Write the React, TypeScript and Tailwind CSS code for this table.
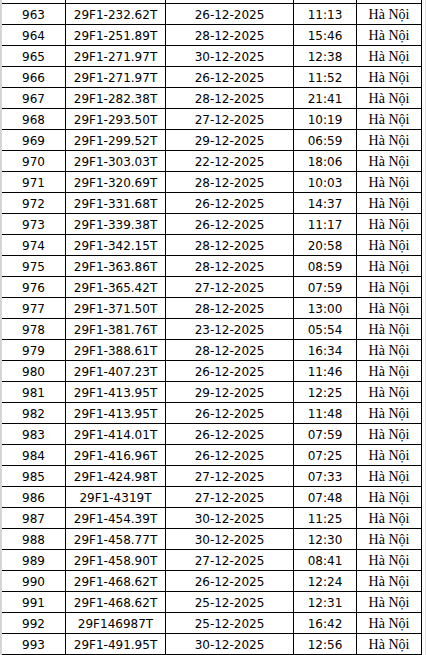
const rows: [string, string, string, string][] = [
  ["963", "29F1-232.62T", "26-12-2025", "11:13"],
  ["964", "29F1-251.89T", "28-12-2025", "15:46"],
  ["965", "29F1-271.97T", "30-12-2025", "12:38"],
  ["966", "29F1-271.97T", "26-12-2025", "11:52"],
  ["967", "29F1-282.38T", "28-12-2025", "21:41"],
  ["968", "29F1-293.50T", "27-12-2025", "10:19"],
  ["969", "29F1-299.52T", "29-12-2025", "06:59"],
  ["970", "29F1-303.03T", "22-12-2025", "18:06"],
  ["971", "29F1-320.69T", "28-12-2025", "10:03"],
  ["972", "29F1-331.68T", "26-12-2025", "14:37"],
  ["973", "29F1-339.38T", "26-12-2025", "11:17"],
  ["974", "29F1-342.15T", "28-12-2025", "20:58"],
  ["975", "29F1-363.86T", "28-12-2025", "08:59"],
  ["976", "29F1-365.42T", "27-12-2025", "07:59"],
  ["977", "29F1-371.50T", "28-12-2025", "13:00"],
  ["978", "29F1-381.76T", "23-12-2025", "05:54"],
  ["979", "29F1-388.61T", "28-12-2025", "16:34"],
  ["980", "29F1-407.23T", "26-12-2025", "11:46"],
  ["981", "29F1-413.95T", "29-12-2025", "12:25"],
  ["982", "29F1-413.95T", "26-12-2025", "11:48"],
  ["983", "29F1-414.01T", "26-12-2025", "07:59"],
  ["984", "29F1-416.96T", "26-12-2025", "07:25"],
  ["985", "29F1-424.98T", "27-12-2025", "07:33"],
  ["986", "29F1-4319T", "27-12-2025", "07:48"],
  ["987", "29F1-454.39T", "30-12-2025", "11:25"],
  ["988", "29F1-458.77T", "30-12-2025", "12:30"],
  ["989", "29F1-458.90T", "27-12-2025", "08:41"],
  ["990", "29F1-468.62T", "26-12-2025", "12:24"],
  ["991", "29F1-468.62T", "25-12-2025", "12:31"],
  ["992", "29F146987T", "25-12-2025", "16:42"],
  ["993", "29F1-491.95T", "30-12-2025", "12:56"],
];

const sans = "flex items-end justify-center border-r border-black pb-[1px] text-[12px] leading-[16px] text-black [font-family:'DejaVu_Sans',sans-serif]";
const serif = "flex items-end justify-center border-r border-black pb-[1px] text-[14px] leading-[17px] text-black [font-family:'Liberation_Serif',serif]";

export default function App() {
  return (
    <div className="flex h-[655px] w-[426px] overflow-hidden bg-white">
      <div className="w-[2px] shrink-0 bg-[#d4d4d4]" />
      <div className="flex w-[420px] flex-col">
        {/* tail of the row above, cut off */}
        <div className="grid h-[3px] grid-cols-[64px_100px_128px_63px_65px]">
          <div className="border-r border-black" />
          <div className="border-r border-black" />
          <div className="border-r border-black" />
          <div className="border-r border-black" />
          <div className="border-r border-black" />
        </div>
        {rows.map((r, i) => (
          <div
            key={r[0]}
            className={`grid h-[21px] grid-cols-[64px_100px_128px_63px_65px] border-t border-black ${
              i === rows.length - 1 ? "h-[22px] border-b" : ""
            }`}
          >
            <div className={sans}>{r[0]}</div>
            <div className={sans}>{r[1]}</div>
            <div className={sans}>{r[2]}</div>
            <div className={sans}>{r[3]}</div>
            <div className={serif}>Hà Nội</div>
          </div>
        ))}
      </div>
      <div className="w-[4px] shrink-0 border-r border-[#e3e3e3]" />
    </div>
  );
}
